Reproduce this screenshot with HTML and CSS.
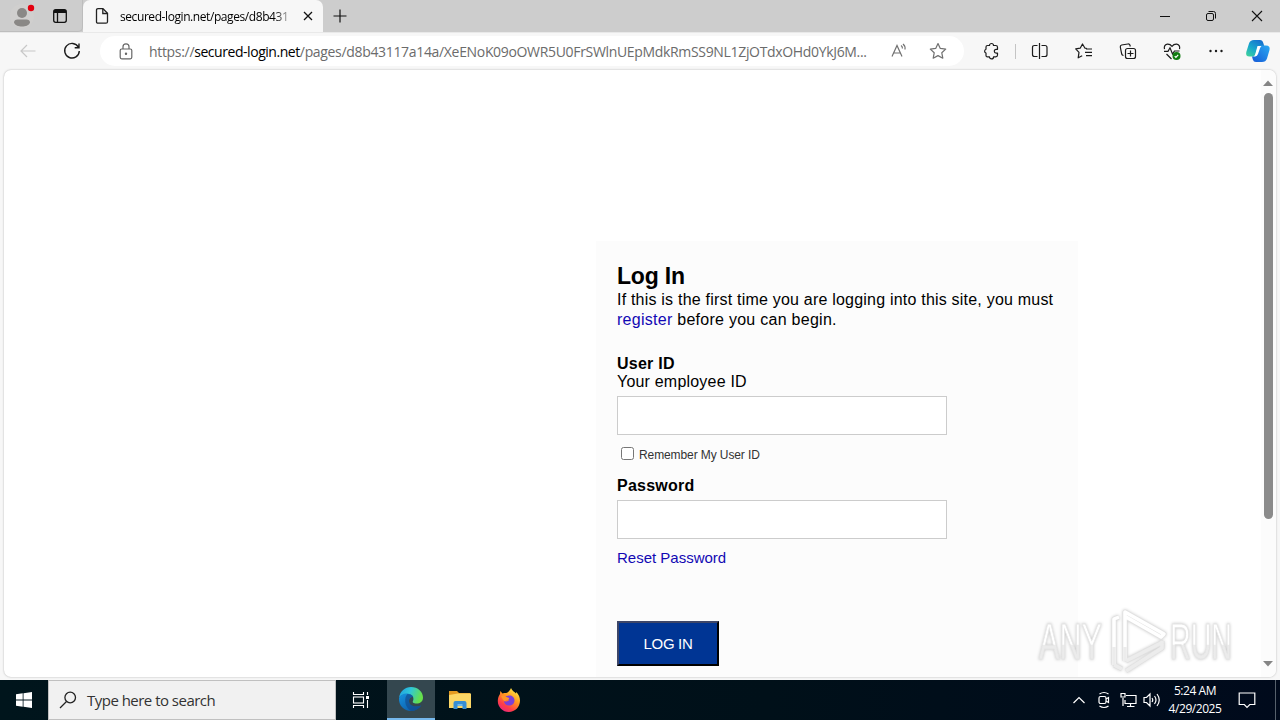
FILE: index.html
```html
<!DOCTYPE html>
<html lang="en">
<head>
    <meta charset="utf-8">
    <title>secured-login.net</title>
    <link rel="stylesheet" href="styles.css">
</head>
<body>
    <div class="desktop">
        <div class="tabs-bar">
            <div class="tabs-left">
                <svg class="profile" width="26" height="26" viewBox="0 0 26 26">
                    <circle cx="13" cy="13" r="12" fill="#d0cfce"/>
                    <circle cx="13" cy="10" r="5" fill="#8a8886"/>
                    <path d="M5 19.500c0-2 1.500-3 3.500-3h9c2 0 3.500 1 3.500 3-1 3-4.500 4-8 4s-7-1-8-4z" fill="#8a8886"/>
                    <circle cx="22" cy="5" r="3.200" fill="#e3000f"/>
                </svg>
                <svg class="workspaces" width="16" height="16" viewBox="0 0 16 16" fill="none" stroke="#111" stroke-width="1.300">
                    <rect x="1.700" y="1.700" width="12.600" height="12.600" rx="2"/>
                    <path d="M2 3.500h12" stroke-width="3"/>
                    <path d="M5.500 4v10"/>
                </svg>
            </div>
            <div class="tab">
                <svg width="14" height="18" viewBox="0 0 14 18" fill="none" stroke="#222" stroke-width="1.300">
                    <path d="M3 1.700h5l4.500 4.500v8.500q0 1.500-1.500 1.500H3q-1.500 0-1.500-1.500V3.200Q1.500 1.700 3 1.700z"/>
                    <path d="M7.800 2v4.500h4.500"/>
                </svg>
                <span class="tab-title">secured-login.net/pages/d8b431</span>
                <svg class="tab-close" width="10" height="10" viewBox="0 0 10 10" stroke="#111" stroke-width="1.300"><path d="M1 1l8 8M9 1l-8 8"/></svg>
            </div>
            <svg class="new-tab" width="14" height="14" viewBox="0 0 14 14" stroke="#111" stroke-width="1.200"><path d="M7 .5v13M.5 7h13"/></svg>
            <div class="window-buttons">
                <svg width="46" height="32" viewBox="0 0 46 32" stroke="#111"><path d="M18 16.500h10"/></svg>
                <svg width="46" height="32" viewBox="0 0 46 32" fill="none" stroke="#111"><rect x="18.500" y="13.500" width="7" height="7" rx="1.500"/><path d="M20.500 11.500h5q2 0 2 2v5"/></svg>
                <svg width="46" height="32" viewBox="0 0 46 32" stroke="#111" stroke-width="1.100"><path d="M18 11l10 10M28 11l-10 10"/></svg>
            </div>
        </div>

        <div class="toolbar">
            <svg class="back" width="18" height="14" viewBox="0 0 18 14" fill="none" stroke="#c8c8c8" stroke-width="1.200"><path d="M16.500 7H2M8 1L2 7l6 6"/></svg>
            <svg class="reload" width="20" height="20" viewBox="0 0 20 20" fill="none" stroke="#1b1b1b" stroke-width="1.400"><path d="M16.400 6.200A7.300 7.300 0 1 0 17.300 10M17 2.500v4.300h-4.300"/></svg>
            <div class="address">
                <svg class="lock" width="14" height="17" viewBox="0 0 14 17" fill="none" stroke="#666" stroke-width="1.200">
                    <rect x="1.200" y="6" width="11.600" height="9.800" rx="1.500"/>
                    <path d="M4 6V3.800a3 3 0 0 1 6 0V6"/>
                    <circle cx="7" cy="10.800" r=".6" fill="#666"/>
                </svg>
                <span class="url"><span class="scheme">https://</span><span class="host">secured-login.net</span><span class="path">/pages/d8b43117a14a/XeENoK09oOWR5U0FrSWlnUEpMdkRmSS9NL1ZjOTdxOHd0YkJ6M...</span></span>
                <svg class="read-aloud" width="18" height="16" viewBox="0 0 18 16" fill="none" stroke="#707070" stroke-width="1.200"><path d="M2 13.500L7 2.500 12 13.500M3.800 10h6.500M11 2.500q1.600 1 1.400 3M13 1q2.500 2 2 5.500"/></svg>
                <svg class="star" width="18" height="18" viewBox="0 0 18 18" fill="none" stroke="#707070" stroke-width="1.200" stroke-linejoin="round"><path d="M9 1.500l2.300 4.900 5.400.7-3.900 3.700 1 5.400L9 13.600l-4.800 2.600 1-5.400L1.300 7.100l5.400-.7z"/></svg>
            </div>
            <div class="tools">
                <svg class="puzzle" width="18" height="18" viewBox="0 0 18 18" fill="none" stroke="#1b1b1b" stroke-width="1.200" stroke-linejoin="round"><path d="M5.500 3.500h2a2 2 0 0 1 4 0h2.200q1.800 0 1.800 1.800v2h-1.300a1.900 1.900 0 0 0 0 3.800h1.300v2q0 1.800-1.800 1.800h-2.200a2 2 0 0 1-4 0h-2q-1.500 0-1.500-1.500v-2.300a2 2 0 0 1 0-3.800V5q0-1.500 1.500-1.500z"/></svg>
                <span class="divider"></span>
                <svg class="split" width="18" height="18" viewBox="0 0 18 18" fill="none" stroke="#1b1b1b" stroke-width="1.200"><path d="M8.500 1v16M6.500 3.500H3.500q-2 0-2 2v7q0 2 2 2h3M10.500 3.500h3.500q2 0 2 2v7q0 2-2 2h-3.500"/></svg>
                <svg class="tool" width="44" height="20" viewBox="0 0 44 20" fill="none" stroke="#1b1b1b" stroke-width="1.200" stroke-linejoin="round"><path d="M25 7.500l-2-.3L20.500 3 18.200 7.200l-4.500.7 3.300 3.500-.8 5.400 4-2M30 8h-6M30 11.300h-7M30 14.600h-6"/></svg>
                <svg class="tool" width="44" height="20" viewBox="0 0 44 20" fill="none" stroke="#1b1b1b" stroke-width="1.200"><rect x="19.500" y="7.500" width="10" height="10" rx="2"/><path d="M24.500 9.500v6M21.500 12.500h6M17.500 14.500q-1.500-.2-1.800-1.500L14.300 6q-.2-1.600 1.300-2l6.300-1q1.600-.2 2.100 1.300l.3 1.200"/></svg>
                <svg class="tool" width="44" height="20" viewBox="0 0 44 20" fill="none" stroke="#1b1b1b" stroke-width="1.200">
                    <path d="M14.500 8.200Q13.500 4 17.300 3.200 20.200 3 22 5.300q1.800-2.300 4.700-2.100Q30.500 4 29.500 8.200M16.500 13l5 5M14 10.300h4l2-3.500 2.500 6.200 2-3h5"/>
                    <circle cx="26.500" cy="15" r="4" fill="#107c10" stroke="none"/><path d="M24.700 15.200l1.200 1.200 2.300-2.500" stroke="#fff"/>
                </svg>
                <svg class="tool" width="44" height="20" viewBox="0 0 44 20" fill="#1b1b1b"><circle cx="16.500" cy="10" r="1.200"/><circle cx="22" cy="10" r="1.200"/><circle cx="27.500" cy="10" r="1.200"/></svg>
                <svg class="copilot" width="26" height="24" viewBox="0 0 26 24">
                    <defs>
                        <linearGradient id="cp1" x1="0" y1="1" x2=".7" y2="0"><stop offset="0" stop-color="#43d696"/><stop offset=".5" stop-color="#18a8cc"/><stop offset="1" stop-color="#1572cf"/></linearGradient>
                        <linearGradient id="cp2" x1="1" y1="0" x2="0" y2="1"><stop offset="0" stop-color="#29a9f2"/><stop offset="1" stop-color="#1659d6"/></linearGradient>
                    </defs>
                    <path d="M9 1h6q2.500 0 3.300 3l1 3.200h-4.200q-2 0-2.700 2l-1.800 6q-.7 2.300-2.800 2.300H4.500q-4.200 0-3.200-4.500L4 4.500Q5 1 9 1z" fill="url(#cp1)"/>
                    <path d="M17 23h-6q-2.500 0-3.200-2.500L7 17.500h1.500q1.700 0 2.300-2.200l2-6.500q.8-2.300 2.800-2.300H21q4.500 0 3.500 4.500L22 19.500Q20.800 23 17 23z" fill="url(#cp2)"/>
                    <path d="M12.500 7h4q-1 .8-1.500 2.300L13 15q-.8 2.400-2.800 2.400H8.800q1-.7 1.500-2.300z" fill="#fff"/>
                </svg>
            </div>
        </div>

        <div class="viewport">
            <div class="page">
                <div class="login-panel">
                    <h1>Log In</h1>
                    <p class="intro">If this is the first time you are logging into this site, you must<br><span class="before"><a href="#">register</a> before you can begin.</span></p>
                    <label class="field-label" for="userid">User ID</label>
                    <div class="hint">Your employee ID</div>
                    <input class="field" type="text" id="userid">
                    <div class="remember">
                        <input type="checkbox" id="remember">
                        <label for="remember">Remember My User ID</label>
                    </div>
                    <label class="field-label" for="password">Password</label>
                    <input class="field" type="password" id="password">
                    <div class="reset"><a href="#">Reset Password</a></div>
                    <button class="login-button">LOG IN</button>
                </div>
            </div>
            <div class="scrollbar">
                <svg width="10" height="6" viewBox="0 0 10 6"><path d="M0 6l5-5.500L10 6z" fill="#858585"/></svg>
                <div class="thumb"></div>
                <svg class="arrow-down" width="10" height="6" viewBox="0 0 10 6"><path d="M0 0l5 5.500L10 0z" fill="#858585"/></svg>
            </div>
            <svg class="watermark" width="214" height="70" viewBox="0 0 214 70">
                <defs>
                    <linearGradient id="wm" x1="0" y1="0" x2="0" y2="1"><stop offset=".54" stop-color="#fff"/><stop offset=".56" stop-color="#ebebeb"/></linearGradient>
                </defs>
                <g class="wm-text" fill="url(#wm)">
                    <text x="5" y="52" textLength="63" lengthAdjust="spacingAndGlyphs">ANY</text>
                    <text x="136" y="52" textLength="62" lengthAdjust="spacingAndGlyphs">RUN</text>
                </g>
                <g fill="none" stroke-linejoin="round">
                    <path class="edge" d="M80 58V12l5-2M91 54V5l39 22-3 3-35-20M92 54l37-19M92 64l36-23V34M80 58l8 4"/>
                    <path class="face" d="M80 58V12l5-2M91 54V5l39 22-3 3-35-20"/>
                    <path class="face low" d="M92 54l37-19M92 64l36-23V34M80 58l8 4M80 58V40M91 54V40"/>
                </g>
            </svg>
        </div>

        <div class="taskbar">
            <div class="start">
                <svg width="16" height="16" viewBox="0 0 16 16" fill="#fff"><path d="M0 2.300l6.700-1v6.300H0zM7.500 1.200L16 0v7.600H7.500zM0 8.400h6.700v6.300l-6.700-1zM7.500 8.400H16V16l-8.500-1.200z"/></svg>
            </div>
            <div class="search">
                <svg width="18" height="18" viewBox="0 0 18 18" fill="none" stroke="#222" stroke-width="1.300"><circle cx="11.200" cy="6.500" r="5.300"/><path d="M7.500 10.500L1 17"/></svg>
                <span>Type here to search</span>
            </div>
            <div class="task task-view">
                <svg width="18" height="18" viewBox="0 0 18 18" fill="none" stroke="#fff" stroke-width="1.100"><path d="M1.500 1v2.500h10V1M1.500 17v-2.500h10V17M15.500 1v3M15.500 9v8"/><rect x="1.500" y="6" width="10" height="6"/><path d="M14 6.500h3" stroke-width="3"/></svg>
            </div>
            <div class="task active">
                <svg width="26" height="26" viewBox="0 0 26 26">
                    <defs>
                        <linearGradient id="eg1" x1="0" y1="0" x2="1" y2=".3"><stop offset="0" stop-color="#1c9de5"/><stop offset=".5" stop-color="#30c7d7"/><stop offset="1" stop-color="#66e04b"/></linearGradient>
                        <linearGradient id="eg2" x1="0" y1="0" x2=".8" y2="1"><stop offset="0" stop-color="#1693e0"/><stop offset="1" stop-color="#0c59a4"/></linearGradient>
                    </defs>
                    <path d="M1 12C2 5 7 1 13 1c7 0 12 5 12 10.500 0 4-3 6-6.500 6-3 0-4.500-1.200-3.500-2.500 1.500-3-.5-7-5.500-7C5 8 2 10 1 12z" fill="url(#eg1)"/>
                    <path d="M1 12c1.500-3.500 5-5 8.500-4.500 3 .3 5 1.800 5.800 3.700-2.300-.7-4.300 1-4.300 3.800 0 4.500 5 7 12.300 4.500C21 23 17 25 13 25 6 25 .5 19.500 1 12z" fill="url(#eg2)"/>
                    <path d="M9.500 8C6 11 6 21 13 25c4 0 8-2 10.300-5.500C17 22 11 19.500 11 15c0-2.800 2-4.500 4.300-3.800C14.500 9 12 8 9.500 8z" fill="#124a8c" opacity=".65"/>
                </svg>
            </div>
            <div class="task">
                <svg width="24" height="20" viewBox="0 0 24 20">
                    <path d="M1 1h8l2 2h11v5H1z" fill="#e49b21"/><path d="M1 5l9-1.500h13V18H1z" fill="#fcd766"/>
                    <path d="M5.500 19v-6q0-2 2-2h9q2 0 2 2v6h-4v-3h-5v3z" fill="#388ed4"/><path d="M9.500 14h5v2h-5z" fill="#6eb8ec"/>
                </svg>
            </div>
            <div class="task">
                <svg width="24" height="26" viewBox="0 0 24 26">
                    <defs><linearGradient id="ff" x1=".8" y1="0" x2=".2" y2="1"><stop offset="0" stop-color="#fff04a"/><stop offset=".4" stop-color="#ff9a1f"/><stop offset=".75" stop-color="#ff3c48"/><stop offset="1" stop-color="#e62484"/></linearGradient></defs>
                    <path d="M14 1c1 3 3.500 3.500 5 5.500l.3-1.500c2.500 2.500 3.700 5.500 3.700 8.500 0 6.500-5 11.500-11.200 11.500S.8 20 .8 14c0-3 1-5.300 2.200-7l.3-3 2.200 2.500C6.500 6 8 6 9 6c2-.5 4-2.500 5-5z" fill="url(#ff)"/>
                    <path d="M8 9.500c3-1 4-.5 4.500-1 2.500-.5 5 2 5 5 0 3-2.500 5-5.500 5s-5-2-5-4.500c2 1 4 .5 5-1l-2-1c-1.300 0-2-1-2-2.500z" fill="#7a40d8"/>
                    <path d="M4 9c2-1.200 4-1 5 .8l3 1.200c.5 2-2 2-3 2.500-1 1.500-3 .5-5-4.500z" fill="#ff9626"/>
                </svg>
            </div>
            <div class="tray">
                <svg class="chevron" width="14" height="8" viewBox="0 0 14 8" fill="none" stroke="#fff" stroke-width="1.200"><path d="M1.500 7L7 1.500 12.500 7"/></svg>
                <svg class="meet" width="14" height="18" viewBox="0 0 14 18" fill="none" stroke="#fff" stroke-width="1.200"><rect x="2" y="5.500" width="7" height="7" rx="1.500"/><path d="M9 8l2.500-1.500v5L9 10M2.500 3Q7 0 11.500 3M2.500 15q4.500 3 9 0"/></svg>
                <svg class="net" width="17" height="16" viewBox="0 0 17 16" fill="none" stroke="#fff" stroke-width="1.200"><path d="M6 3.500h10v8H5V8M10.500 11.500v3M7 14.500h7.500M3 6v8"/><path d="M1 1.500h4V5H1z"/></svg>
                <svg class="volume" width="18" height="16" viewBox="0 0 18 16" fill="none" stroke="#fff" stroke-width="1.200"><path d="M1 5.500h2.500L7 2v12l-3.500-3.500H1zM9 6q1.500 2 0 4M11.500 4q3 4 0 8M14 2q4.500 6 0 12"/></svg>
                <div class="clock"><span>5:24 AM</span><span>4/29/2025</span></div>
                <svg class="notify" width="18" height="18" viewBox="0 0 18 18" fill="none" stroke="#fff" stroke-width="1.200"><path d="M1.200 2h15.600v11.500h-5L9 16.300l-2.700-2.800H1.200z"/></svg>
                <span class="show-desktop"></span>
            </div>
        </div>
    </div>
</body>
</html>
```
FILE: styles.css
```css
* {
    box-sizing: border-box;
}
body {
    margin: 0;
    font-family: "Open Sans", "Noto Sans", sans-serif;
    color: #000;
}
svg {
    display: block;
    flex-shrink: 0;
}
a {
    color: #1208b4;
    text-decoration: none;
}
.desktop {
    width: 1280px;
    height: 720px;
    display: flex;
    flex-direction: column;
    overflow: hidden;
    background: #f7f7f7;
}

/* browser tabs */
.tabs-bar {
    height: 32px;
    display: flex;
    align-items: center;
    background: #cdcdcd;
}
.tabs-left {
    width: 83px;
    height: 32px;
    display: flex;
    align-items: center;
    gap: 17px;
    padding-left: 9px;
    border-bottom: 1px solid #bdbdbd;
    border-right: 1px solid #bdbdbd;
    border-bottom-right-radius: 5px;
}
.tab {
    width: 240px;
    height: 32px;
    display: flex;
    align-items: center;
    padding-left: 12px;
    background: #f7f7f7;
    border-radius: 7px 7px 0 0;
}
.tab-title {
    width: 175px;
    margin-left: 11px;
    font-size: 12px;
    letter-spacing: -0.42px;
    white-space: nowrap;
    overflow: hidden;
    -webkit-mask-image: linear-gradient(90deg, #000 88%, transparent);
}
.tab-close {
    margin-left: 8px;
}
.new-tab {
    margin-left: 10px;
}
.window-buttons {
    display: flex;
    margin-left: auto;
}

/* toolbar */
.toolbar {
    height: 38px;
    display: flex;
    align-items: center;
    padding-bottom: 1px;
    background: #f7f7f7;
    border-top: 1px solid #e9e9e9;
}
.back {
    margin-left: 19px;
}
.reload {
    margin-left: 25px;
}
.address {
    width: 864px;
    height: 30px;
    margin-left: 18px;
    display: flex;
    align-items: center;
    background: #fff;
    border-radius: 15px;
}
.lock {
    margin-left: 19px;
}
.url {
    width: 726px;
    margin-left: 16px;
    font-size: 14px;
    white-space: nowrap;
    color: #6b6b6b;
}
.scheme {
    letter-spacing: -0.32px;
}
.host {
    color: #000;
    letter-spacing: -0.45px;
}
.path {
    letter-spacing: -0.33px;
}
.read-aloud {
    margin-left: 15px;
}
.star {
    margin-left: 21px;
}
.tools {
    display: flex;
    align-items: center;
    margin-left: 18px;
}
.divider {
    width: 1px;
    height: 15px;
    margin: 0 15px;
    background: #c4c4c4;
}
.split {
    margin-right: 13px;
}
.copilot {
    margin-left: 7px;
}

/* page area */
.viewport {
    position: relative;
    height: 607px;
    margin: 0 4px 3px;
    display: flex;
    background: #fff;
    border-radius: 7px;
    box-shadow: 0 0 2px #aaa;
    overflow: hidden;
}
.page {
    width: 1257px;
    padding: 171px 0 0 592px;
    font-family: "Liberation Sans", Arial, sans-serif;
}
.login-panel {
    width: 482px;
    height: 440px;
    padding: 22px 21px 0;
    background: #fcfcfc;
}
h1 {
    margin: 0;
    font-size: 23px;
    line-height: 26px;
    letter-spacing: -0.2px;
}
.intro {
    margin: 1px 0 25px;
    font-size: 16px;
    line-height: 20px;
    letter-spacing: 0.21px;
    white-space: nowrap;
}
.before {
    letter-spacing: 0.27px;
}
.field-label {
    display: block;
    font-size: 16px;
    font-weight: bold;
    line-height: 18px;
    letter-spacing: 0.25px;
}
.hint {
    font-size: 16px;
    line-height: 18px;
    letter-spacing: 0.2px;
    margin-bottom: 5px;
}
.field {
    display: block;
    width: 330px;
    height: 39px;
    margin: 0;
    border: 1px solid #ccc;
    background: #fff;
}
.remember {
    display: flex;
    align-items: center;
    height: 42px;
    padding: 0 0 2px 4px;
    font-size: 12px;
    letter-spacing: -0.1px;
    color: #333;
}
.remember input {
    width: 13px;
    height: 13px;
    margin: 0 5px 4px 0;
}
#password {
    margin-top: 5px;
}
.reset {
    margin-top: 10px;
    font-size: 15px;
    line-height: 18px;
}
.login-button {
    width: 102px;
    height: 45px;
    margin-top: 54px;
    padding: 0;
    font-family: "Liberation Sans", Arial, sans-serif;
    font-size: 15px;
    letter-spacing: -0.3px;
    color: #fff;
    background: #003594;
    border: 2px solid;
    border-color: #3d4668 #000 #000 #3d4668;
}
.scrollbar {
    width: 15px;
    display: flex;
    flex-direction: column;
    align-items: center;
    padding: 10px 1px 0 0;
    background: #fcfcfc;
}
.thumb {
    width: 9px;
    height: 426px;
    margin-top: 7px;
    border-radius: 5px;
    background: #8b8b8b;
}
.arrow-down {
    margin-top: 142px;
}

/* watermark over the page */
.watermark {
    position: absolute;
    left: 1030px;
    top: 537px;
}
.wm-text {
    font-family: "Liberation Sans", Arial, sans-serif;
    font-size: 50px;
    stroke: #e6e6e6;
    stroke-width: 1px;
    filter: drop-shadow(0 0 1.5px #c4c4c4);
}
.edge {
    stroke: #e2e2e2;
    stroke-width: 5px;
    filter: drop-shadow(0 0 1.5px #ccc);
}
.face {
    stroke: #fff;
    stroke-width: 3.5px;
}
.low {
    stroke: #ececec;
}

/* taskbar */
.taskbar {
    height: 40px;
    display: flex;
    align-items: center;
    background: linear-gradient(90deg, #00151c, #001019 60%, #000a1c);
}
.start {
    width: 48px;
    display: flex;
    justify-content: center;
}
.search {
    width: 288px;
    height: 40px;
    display: flex;
    align-items: center;
    gap: 10px;
    padding-left: 10px;
    font-size: 15px;
    letter-spacing: -0.52px;
    color: #333;
    background: #f1f1f1;
    border: 1px solid #c0c0c0;
}
.task {
    width: 48px;
    height: 40px;
    margin-right: 1px;
    display: flex;
    align-items: center;
    justify-content: center;
}
.task-view {
    width: 50px;
}
.active {
    background: #34474f;
    border-bottom: 2px solid #76b9ed;
}
.tray {
    height: 40px;
    margin-left: auto;
    display: flex;
    align-items: center;
}
.meet {
    margin-left: 11px;
}
.net {
    margin-left: 9px;
}
.volume {
    margin-left: 6px;
}
.clock {
    width: 58px;
    margin-left: 5px;
    display: flex;
    flex-direction: column;
    align-items: center;
    font-size: 12px;
    line-height: 18px;
    letter-spacing: -0.45px;
    color: #fff;
}
.notify {
    margin-left: 14px;
}
.show-desktop {
    width: 5px;
    height: 40px;
    margin-left: 19px;
    border-left: 1px solid #56606c;
}
```
